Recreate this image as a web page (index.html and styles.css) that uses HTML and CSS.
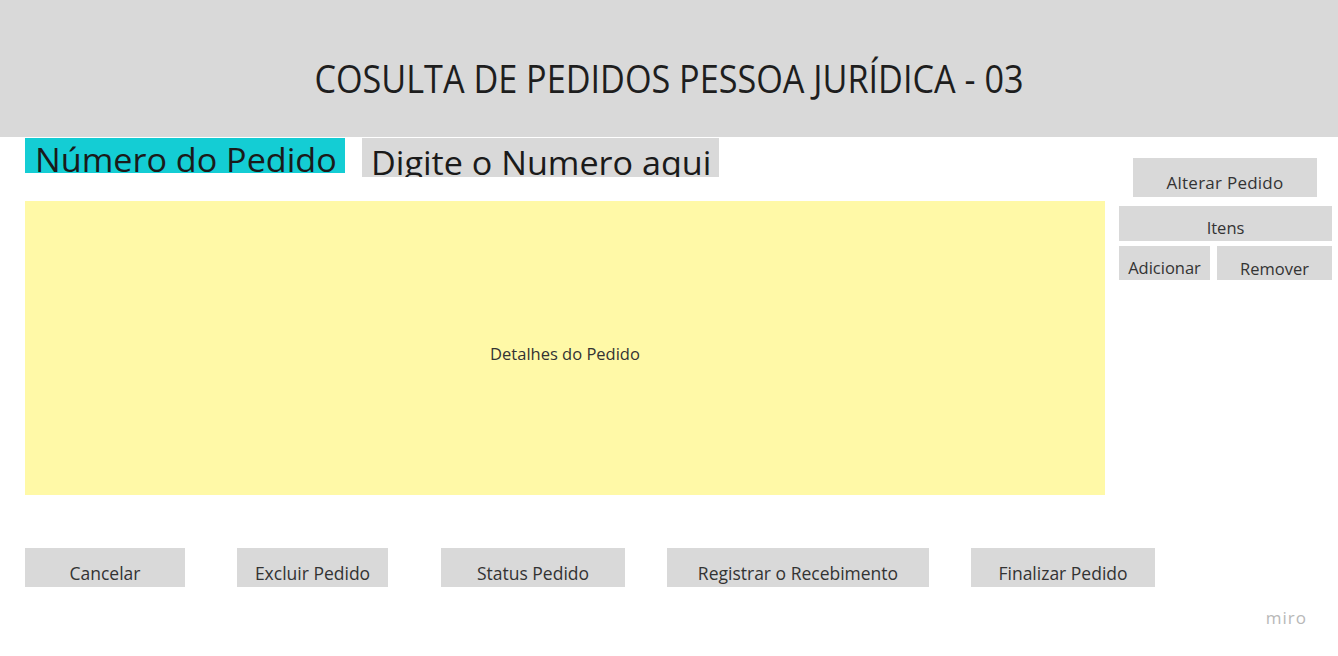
FILE: index.html
```html
<!DOCTYPE html>
<html lang="pt">
<head>
<meta charset="utf-8">
<title>Consulta de Pedidos</title>
<link rel="stylesheet" href="styles.css">
</head>
<body>
<header class="header">
  <h1 class="title">COSULTA DE PEDIDOS PESSOA JURÍDICA - 03</h1>
</header>
<main class="main">
  <section class="left">
    <div class="search-row">
      <div class="label-box"><span class="wide">Número do Pedido</span></div>
      <div class="input-box"><span class="wide">Digite o Numero aqui</span></div>
    </div>
    <div class="details">Detalhes do Pedido</div>
  </section>
  <aside class="side">
    <div class="btn btn-alter">Alterar Pedido</div>
    <div class="btn btn-itens">Itens</div>
    <div class="pair">
      <div class="btn btn-add">Adicionar</div>
      <div class="btn btn-rem">Remover</div>
    </div>
  </aside>
</main>
<footer class="actions">
  <div class="btn act act-cancel">Cancelar</div>
  <div class="btn act act-del">Excluir Pedido</div>
  <div class="btn act act-status">Status Pedido</div>
  <div class="btn act act-reg">Registrar o Recebimento</div>
  <div class="btn act act-fin">Finalizar Pedido</div>
</footer>
<div class="brand">miro</div>
</body>
</html>
```
FILE: styles.css
```css
* { box-sizing: border-box; }
html, body { margin: 0; padding: 0; background: #fff; }
body {
  font-family: "Open Sans", "Noto Sans", sans-serif;
  color: #222;
  width: 1338px;
  height: 656px;
  overflow: hidden;
  position: relative;
}
.header {
  height: 137px;
  background: #d9d9d9;
  display: flex;
  align-items: center;
  justify-content: center;
}
.title {
  margin: 19px 0 0 0;
  font-weight: 400;
  font-size: 38px;
  line-height: 44px;
  color: #1e1e1e;
  white-space: nowrap;
  transform: scaleX(0.9);
}
.main {
  display: flex;
  padding-left: 25px;
}
.left { width: 1080px; }
.search-row {
  display: flex;
  align-items: flex-start;
  padding-top: 1px;
}
.wide {
  display: inline-block;
  transform: scaleX(1.067);
  transform-origin: left center;
}
.label-box {
  width: 320px;
  height: 35px;
  background: #14cdd4;
  font-size: 32px;
  line-height: 44px;
  padding-left: 10px;
  overflow: hidden;
  white-space: nowrap;
  color: #1a1a1a;
}
.input-box {
  margin-left: 17px;
  width: 357px;
  height: 39px;
  background: #d9d9d9;
  font-size: 32px;
  line-height: 50px;
  padding-left: 9px;
  overflow: hidden;
  white-space: nowrap;
  color: #1a1a1a;
}
.details {
  margin-top: 24px;
  height: 294px;
  background: #fff9a7;
  display: flex;
  align-items: center;
  justify-content: center;
  font-size: 16.5px;
  color: #333;
  padding-top: 10px;
}
.side {
  margin-left: 14px;
  width: 213px;
  padding-top: 21px;
  display: flex;
  flex-direction: column;
}
.btn {
  background: #d9d9d9;
  color: #333;
  font-size: 16.5px;
  text-align: center;
  white-space: nowrap;
}
.btn-alter {
  margin-left: 14px;
  width: 184px;
  height: 39px;
  padding-top: 14px;
  line-height: 22px;
  font-size: 17px;
  letter-spacing: 0.25px;
}
.btn-itens {
  margin-top: 9px;
  height: 35px;
  padding-top: 11px;
  line-height: 22px;
}
.pair {
  margin-top: 5px;
  display: flex;
  gap: 7px;
}
.btn-add {
  width: 91px;
  height: 34px;
  padding-top: 11px;
  line-height: 22px;
}
.btn-rem {
  width: 115px;
  height: 34px;
  padding-top: 12px;
  line-height: 22px;
}
.actions {
  display: flex;
  padding-left: 25px;
  margin-top: 53px;
}
.act {
  height: 39px;
  padding-top: 14px;
  line-height: 23px;
  font-size: 17.5px;
}
.act-cancel { width: 160px; }
.act-del { width: 151px; margin-left: 52px; }
.act-status { width: 184px; margin-left: 53px; }
.act-reg { width: 262px; margin-left: 42px; }
.act-fin { width: 184px; margin-left: 42px; }
.brand {
  position: absolute;
  right: 31px;
  top: 606px;
  font-size: 17px;
  color: #b8b8b8;
  letter-spacing: 1px;
}
```
